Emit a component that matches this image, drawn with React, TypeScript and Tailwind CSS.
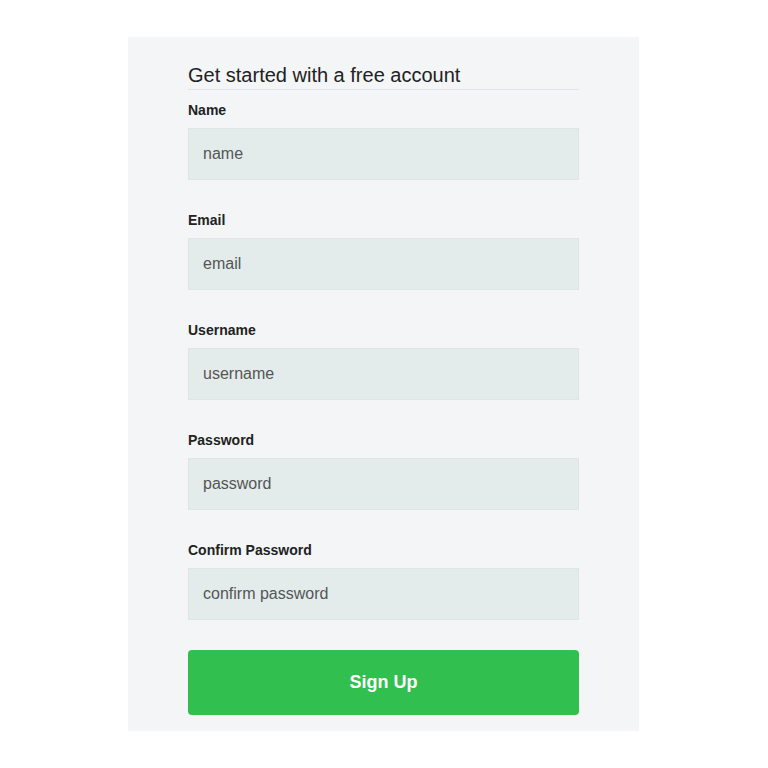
import React from "react";

const fields = [
  { label: "Name", placeholder: "name" },
  { label: "Email", placeholder: "email" },
  { label: "Username", placeholder: "username" },
  { label: "Password", placeholder: "password" },
  { label: "Confirm Password", placeholder: "confirm password" },
];

export default function App() {
  return (
    <div className="min-h-[768px] w-[768px] bg-white pt-[37px] font-['Liberation_Sans',Arial,sans-serif]">
      <div className="ml-[128px] w-[511px] bg-[#f3f5f6] px-[60px] pt-[26px] pb-[16px]">
        <h1 className="border-b border-[#e1e5e8] pb-[1px] text-[20px] leading-[25px] text-[#222]">
          Get started with a free account
        </h1>
        <form className="flex flex-col">
          {fields.map((f, i) => (
            <div key={f.label} className={i === 0 ? "mt-[11px]" : "mt-[31px]"}>
              <label className="block text-[14px] font-bold leading-[18px] text-[#222]">{f.label}</label>
              <input
                type="text"
                placeholder={f.placeholder}
                className="mt-[9px] block h-[52px] w-full border border-[#dde6e5] bg-[#e3eceb] px-[14px] text-[16px] text-[#555] outline-none placeholder:text-[#555]"
              />
            </div>
          ))}
          <button
            type="button"
            className="mt-[30px] h-[65px] w-full rounded-[4px] bg-[#31c04f] text-[18px] font-bold text-white"
          >
            Sign Up
          </button>
        </form>
      </div>
    </div>
  );
}
